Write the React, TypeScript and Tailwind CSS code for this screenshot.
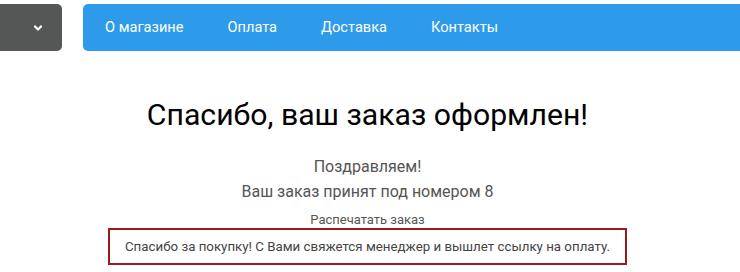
import { ChevronDown } from "lucide-react";

const navItems = ["О магазине", "Оплата", "Доставка", "Контакты"];

export default function App() {
  return (
    <div className="w-[740px] h-[272px] bg-white overflow-hidden font-['Roboto',sans-serif]">
      {/* Top bar */}
      <div className="flex gap-[21px] pt-[4px]">
        <div className="w-[62px] h-[47px] bg-[#555756] rounded-r-[5px] flex items-center justify-end pr-[18px]">
          <ChevronDown className="w-3 h-3 text-white" strokeWidth={4.5} />
        </div>
        <nav className="flex-1 h-[47px] bg-[#2d9bea] rounded-l-[5px] flex items-center pl-[22px] gap-[44px]">
          {navItems.map((item) => (
            <a key={item} className="text-white text-[14.6px]">
              {item}
            </a>
          ))}
        </nav>
      </div>

      {/* Confirmation */}
      <div className="w-[735px] flex flex-col items-center">
        <h1 className="mt-[44px] text-[30.2px] leading-[40px] text-black">
          Спасибо, ваш заказ оформлен!
        </h1>
        <p className="mt-[19px] text-[16px] leading-[25px] text-[#555]">
          Поздравляем!
        </p>
        <p className="text-[16px] leading-[25px] text-[#555]">
          Ваш заказ принят под номером 8
        </p>
        <a className="mt-[8px] text-[13px] leading-[16px] text-[#555]">
          Распечатать заказ
        </a>
        <div className="w-[519px] h-[37px] border-2 border-[#9b1a1a] flex items-center justify-center text-[13.3px] text-[#444]">
          Спасибо за покупку! С Вами свяжется менеджер и вышлет ссылку на оплату.
        </div>
      </div>
    </div>
  );
}
